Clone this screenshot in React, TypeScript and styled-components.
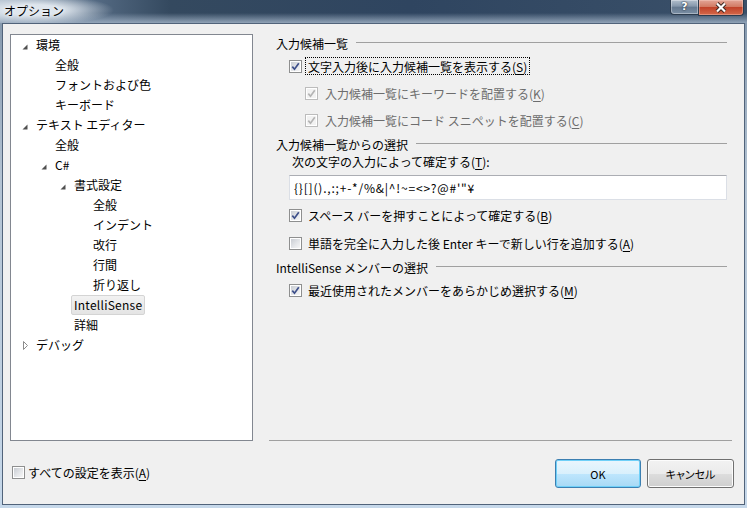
import * as React from "react";
import styled, {createGlobalStyle} from "styled-components";

const GlobalStyle = createGlobalStyle`
  html, body {
    margin: 0;
    padding: 0;
  }
  body {
    width: 747px;
    height: 508px;
    overflow: hidden;
    font-family: "Noto Sans CJK JP", "Noto Sans", sans-serif;
    font-size: 12px;
    color: #000;
  }
`;

const Window = styled.div`
  width: 747px;
  height: 508px;
  display: flex;
  flex-direction: column;
  background: linear-gradient(to bottom, #7f93a8 0, #b3c3d3 35%, #c6d8ea 100%);
`;

const TitleBar = styled.div`
  height: 23px;
  flex: none;
  display: flex;
  align-items: flex-start;
  background:
    radial-gradient(ellipse 80px 15px at 34px 10px, rgba(226, 233, 240, 0.95) 35%, rgba(226, 233, 240, 0) 100%),
    linear-gradient(to bottom, rgba(60, 80, 104, 0) 0, rgba(60, 80, 104, 0) 13px, rgba(150, 168, 188, 0.95) 23px),
    linear-gradient(to right, #a7b7c7 0, #566c85 90px, #34495f 170px, #2f4560 55%, #3a5069 100%);
`;

const Title = styled.div`
  padding: 2px 0 0 4px;
  line-height: 17px;
  font-size: 12px;
  color: #000;
  text-shadow: 0 0 5px #eef2f6, 0 0 3px #eef2f6;
`;

const CaptionButtons = styled.div`
  margin-left: auto;
  margin-right: 3px;
  display: flex;
`;

const HelpButton = styled.div`
  width: 28px;
  height: 15px;
  box-sizing: border-box;
  border: 1px solid #2c3b4d;
  border-right: none;
  border-top: none;
  border-radius: 0 0 0 4px;
  background: linear-gradient(to bottom, #b2bfcc 0, #8597ab 45%, #65798f 50%, #7a8ea4 100%);
  box-shadow: inset 0 0 0 1px rgba(255, 255, 255, 0.35);
  color: #fff;
  font-family: "DejaVu Sans", sans-serif;
  font-weight: bold;
  font-size: 11px;
  line-height: 14px;
  text-align: center;
  text-shadow: 0 0 2px #1d2a38, 0 0 1px #1d2a38;
`;

const CloseButton = styled.div`
  width: 46px;
  height: 16px;
  box-sizing: border-box;
  border: 1px solid #2c3b4d;
  border-top: none;
  border-radius: 0 0 4px 0;
  background: linear-gradient(to bottom, #e3a597 0, #d27a63 45%, #c1432a 50%, #d4684a 100%);
  box-shadow: inset 0 0 0 1px rgba(255, 220, 210, 0.35);
  display: flex;
  align-items: center;
  justify-content: center;
`;

const Client = styled.div`
  flex: 1;
  margin: 0 2px 3px 2px;
  border: 1px solid #51637a;
  background: #f0f0f0;
  display: flex;
  flex-direction: column;
  padding: 10px 12px 0 7px;
  box-sizing: border-box;
`;

const Main = styled.div`
  display: flex;
  height: 407px;
`;

const Tree = styled.div`
  width: 243px;
  flex: none;
  box-sizing: border-box;
  border: 1px solid #828790;
  background: #fff;
`;

const TreeRow = styled.div<{$level: number}>`
  height: 20px;
  display: flex;
  align-items: center;
  padding-left: ${p => 11 + p.$level * 19}px;
`;

const Expander = styled.span`
  width: 14px;
  height: 20px;
  flex: none;
  display: flex;
  align-items: center;
`;

const TreeLabel = styled.span<{$selected?: boolean}>`
  margin-left: -3px;
  padding: 0 2px;
  height: 18px;
  line-height: 18px;
  border: 1px solid ${p => (p.$selected ? "#d4d4d4" : "transparent")};
  border-radius: 2px;
  background: ${p =>
    p.$selected ? "linear-gradient(to bottom, #f2f2f2, #e4e4e4)" : "transparent"};
  letter-spacing: ${p => (p.$selected ? "0.25px" : "0")};
  white-space: nowrap;
`;

const Panel = styled.div`
  flex: 1;
  margin-left: 16px;
  border-bottom: 1px solid #a0a0a0;
  padding: 0 5px 0 7px;
  display: flex;
  flex-direction: column;
`;

const GroupHeader = styled.div<{$mt: number}>`
  margin-top: ${p => p.$mt}px;
  height: 18px;
  display: flex;
  align-items: center;
  gap: 8px;
  white-space: nowrap;
  &::after {
    content: "";
    flex: 1;
    height: 1px;
    margin-top: -2px;
    background: #a0a0a0;
  }
`;

const OptionRow = styled.div<{$indent: number; $mt: number}>`
  margin-top: ${p => p.$mt}px;
  margin-left: ${p => p.$indent}px;
  height: 20px;
  display: flex;
  align-items: center;
`;

const OptionLabel = styled.span<{$focused?: boolean; $disabled?: boolean; $gap: number}>`
  margin-left: ${p => p.$gap}px;
  padding: 0 2px;
  height: 18px;
  line-height: 17px;
  box-sizing: border-box;
  border: 1px ${p => (p.$focused ? "dotted #000" : "solid transparent")};
  color: ${p => (p.$disabled ? "#6d6d6d" : "#000")};
  white-space: nowrap;
`;

const Key = styled.span`
  text-decoration: underline;
  text-underline-offset: 2px;
`;

const Box = styled.span<{$disabled?: boolean}>`
  width: 13px;
  height: 13px;
  flex: none;
  box-sizing: border-box;
  border: 1px solid ${p => (p.$disabled ? "#bcbcbc" : "#8e8f8f")};
  background: #fff;
  padding: 1px;
  display: flex;
`;

const BoxInner = styled.span<{$disabled?: boolean}>`
  flex: 1;
  display: flex;
  align-items: center;
  justify-content: center;
  background: ${p =>
    p.$disabled
      ? "#f2f2f2"
      : "linear-gradient(135deg, #c9cdd3 0, #e4e6e9 55%, #f6f6f6 100%)"};
`;

const FieldLabel = styled.div`
  margin-left: 16px;
  height: 18px;
  line-height: 18px;
`;

const TextBox = styled.div`
  margin: 4px 0 0 13px;
  height: 25px;
  box-sizing: border-box;
  border: 1px solid #dbdfe6;
  border-top-color: #abadb3;
  background: #fff;
  padding: 0 4px;
  display: flex;
  align-items: center;
  letter-spacing: 0.8px;
  white-space: nowrap;
`;

const Footer = styled.div`
  display: flex;
  align-items: flex-start;
  margin-top: 18px;
  height: 29px;
`;

const FooterCheck = styled.div`
  margin: 3px 0 0 2px;
  height: 20px;
  display: flex;
  align-items: center;
`;

const ButtonGroup = styled.div`
  margin-left: auto;
  margin-right: -2px;
  display: flex;
  gap: 6px;
`;

const Button = styled.button<{$default?: boolean; $width: number}>`
  width: ${p => p.$width}px;
  height: 29px;
  box-sizing: border-box;
  margin: 0;
  padding: 0;
  border-radius: 3px;
  border: 1px solid ${p => (p.$default ? "#3c7fb1" : "#707070")};
  background: ${p =>
    p.$default
      ? "linear-gradient(to bottom, #eaf6fd 0, #d9f0fc 50%, #bee6fd 51%, #a7d9f5 100%)"
      : "linear-gradient(to bottom, #f2f2f2 0, #ebebeb 50%, #dddddd 51%, #cfcfcf 100%)"};
  box-shadow: inset 0 0 0 1px ${p => (p.$default ? "#6fd0f8" : "#fcfcfc")};
  font-family: "Noto Sans CJK JP", sans-serif;
  font-size: 11px;
  font-feature-settings: "palt";
  color: #000;
`;

const Triangle = ({open}: {open: boolean}) =>
  open ? (
    <svg width="6" height="6" viewBox="0 0 6 6" style={{marginTop: 3}}>
      <polygon points="5.5,0.5 5.5,5.5 0.5,5.5" fill="#505050" />
    </svg>
  ) : (
    <svg width="6" height="10" viewBox="0 0 6 10" style={{marginLeft: 1, marginTop: 2}}>
      <polygon points="0.5,0.5 4.5,4.5 0.5,8.5" fill="#fff" stroke="#8c8c8c" />
    </svg>
  );

const Check = ({checked, disabled}: {checked: boolean; disabled?: boolean}) => (
  <Box $disabled={disabled}>
    <BoxInner $disabled={disabled}>
      {checked && (
        <svg width="9" height="9" viewBox="0 0 9 9" style={{overflow: "visible"}}>
          <path
            d="M1.3 4.6 L3.5 7.2 L7.8 1.2"
            fill="none"
            stroke={disabled ? "#b4b4b4" : "#3d4f8a"}
            strokeWidth="1.7"
          />
        </svg>
      )}
    </BoxInner>
  </Box>
);

const treeItems = [
  {label: "環境", level: 0, exp: "open"},
  {label: "全般", level: 1},
  {label: "フォントおよび色", level: 1},
  {label: "キーボード", level: 1},
  {label: "テキスト エディター", level: 0, exp: "open"},
  {label: "全般", level: 1},
  {label: "C#", level: 1, exp: "open"},
  {label: "書式設定", level: 2, exp: "open"},
  {label: "全般", level: 3},
  {label: "インデント", level: 3},
  {label: "改行", level: 3},
  {label: "行間", level: 3},
  {label: "折り返し", level: 3},
  {label: "IntelliSense", level: 2, selected: true},
  {label: "詳細", level: 2},
  {label: "デバッグ", level: 0, exp: "closed"},
];

const App = () => {
  return (
    <Window>
      <GlobalStyle />
      <TitleBar>
        <Title>オプション</Title>
        <CaptionButtons>
          <HelpButton>?</HelpButton>
          <CloseButton>
            <svg width="14" height="11" viewBox="0 0 14 11">
              <path d="M3 1.5 L11 9.5 M11 1.5 L3 9.5" stroke="#3a2520" strokeWidth="4" />
              <path d="M3 1.5 L11 9.5 M11 1.5 L3 9.5" stroke="#fff" strokeWidth="2.2" />
            </svg>
          </CloseButton>
        </CaptionButtons>
      </TitleBar>
      <Client>
        <Main>
          <Tree>
            {treeItems.map((item, i) => (
              <TreeRow key={i} $level={item.level}>
                <Expander>{item.exp && <Triangle open={item.exp === "open"} />}</Expander>
                <TreeLabel $selected={item.selected}>{item.label}</TreeLabel>
              </TreeRow>
            ))}
          </Tree>
          <Panel>
            <GroupHeader $mt={0}>入力候補一覧</GroupHeader>
            <OptionRow $indent={13} $mt={4}>
              <Check checked />
              <OptionLabel $gap={3} $focused>
                文字入力後に入力候補一覧を表示する(<Key>S</Key>)
              </OptionLabel>
            </OptionRow>
            <OptionRow $indent={29} $mt={7}>
              <Check checked disabled />
              <OptionLabel $gap={4} $disabled>
                入力候補一覧にキーワードを配置する(<Key>K</Key>)
              </OptionLabel>
            </OptionRow>
            <OptionRow $indent={29} $mt={7}>
              <Check checked disabled />
              <OptionLabel $gap={4} $disabled>
                入力候補一覧にコード スニペットを配置する(<Key>C</Key>)
              </OptionLabel>
            </OptionRow>
            <GroupHeader $mt={5}>入力候補一覧からの選択</GroupHeader>
            <FieldLabel>
              次の文字の入力によって確定する(<Key>T</Key>):
            </FieldLabel>
            <TextBox>{"{}[]().,:;+-*/%&|^!~=<>?@#'\"¥"}</TextBox>
            <OptionRow $indent={13} $mt={5}>
              <Check checked />
              <OptionLabel $gap={3}>
                スペース バーを押すことによって確定する(<Key>B</Key>)
              </OptionLabel>
            </OptionRow>
            <OptionRow $indent={13} $mt={8}>
              <Check checked={false} />
              <OptionLabel $gap={3}>
                単語を完全に入力した後 Enter キーで新しい行を追加する(<Key>A</Key>)
              </OptionLabel>
            </OptionRow>
            <GroupHeader $mt={5}>IntelliSense メンバーの選択</GroupHeader>
            <OptionRow $indent={13} $mt={4}>
              <Check checked />
              <OptionLabel $gap={3}>
                最近使用されたメンバーをあらかじめ選択する(<Key>M</Key>)
              </OptionLabel>
            </OptionRow>
          </Panel>
        </Main>
        <Footer>
          <FooterCheck>
            <Check checked={false} />
            <OptionLabel $gap={0}>
              すべての設定を表示(<Key>A</Key>)
            </OptionLabel>
          </FooterCheck>
          <ButtonGroup>
            <Button $default $width={86}>OK</Button>
            <Button $width={87}>キャンセル</Button>
          </ButtonGroup>
        </Footer>
      </Client>
    </Window>
  );
};

export default App;
